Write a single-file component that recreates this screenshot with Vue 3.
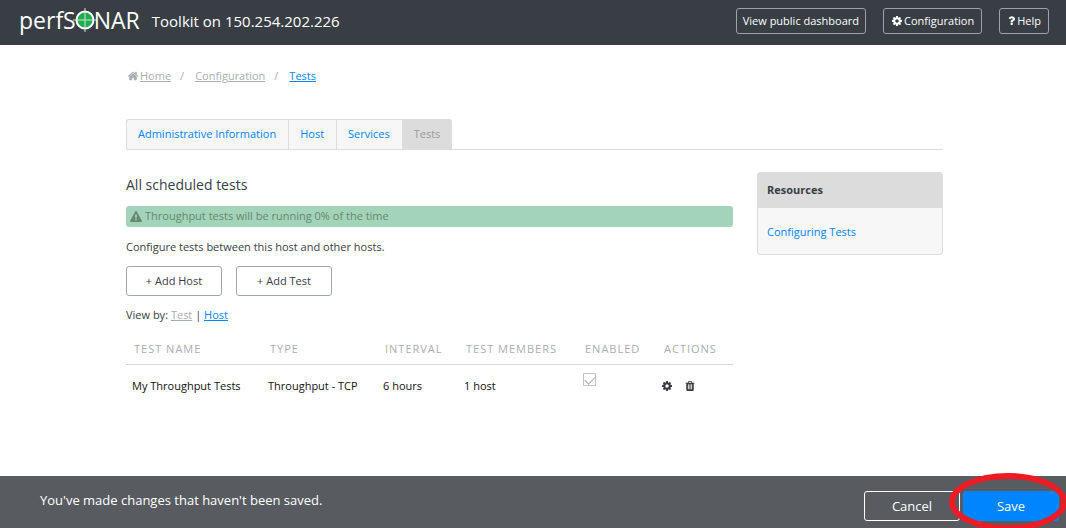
<script setup>
import { ref } from 'vue'

const icons = {
  cog: {
    box: '0 128 1536 1536',
    d: 'M1024 896q0-106-75-181t-181-75-181 75-75 181 75 181 181 75 181-75 75-181zm512-109v222q0 12-8 23t-20 13l-185 28q-19 54-39 91 35 50 107 138 10 12 10 25t-9 23q-27 37-99 108t-94 71q-12 0-26-9l-138-108q-44 23-91 38-16 136-29 186-7 28-36 28h-222q-14 0-24.500-8.500t-11.500-21.500l-28-184q-49-16-90-37l-141 107q-10 9-25 9-14 0-25-11-126-114-165-168-7-10-7-23 0-12 8-23 15-21 51-66.500t54-70.500q-27-50-41-99l-183-27q-13-2-21-12.500t-8-23.500v-222q0-12 8-23t19-13l186-28q14-46 39-92-40-57-107-138-10-12-10-24 0-10 9-23 26-36 98.500-107.500t94.500-71.500q13 0 26 10l138 107q44-23 91-38 16-136 29-186 7-28 36-28h222q14 0 24.500 8.500t11.500 21.500l28 184q49 16 90 37l142-107q9-9 24-9 13 0 25 10 129 119 165 170 7 8 7 22 0 12-8 23-15 21-51 66.500t-54 70.500q26 50 41 98l183 28q13 2 21 12.500t8 23.500z'
  },
  home: {
    box: '0 128 1664 1536',
    d: 'M1408 992v480q0 26-19 45t-45 19h-384v-384h-256v384h-384q-26 0-45-19t-19-45v-480q0-1 .5-3t.5-3l575-474 575 474q1 2 1 6zm223-69l-62 74q-8 9-21 11h-3q-13 0-21-7l-692-577-692 577q-12 8-24 7-13-2-21-11l-62-74q-8-10-7-23.500t11-21.500l719-599q32-26 76-26t76 26l244 204v-195q0-14 9-23t23-9h192q14 0 23 9t9 23v408l219 182q10 8 11 21.500t-7 23.500z'
  },
  warning: {
    box: '0 0 1792 1664',
    d: 'M1024 1375v-190q0-14-9.500-23.500t-22.500-9.500h-192q-13 0-22.500 9.500t-9.500 23.500v190q0 14 9.500 23.500t22.500 9.500h192q13 0 22.500-9.500t9.500-23.500zm-2-374l18-459q0-12-10-19-13-11-24-11h-220q-11 0-24 11-10 7-10 21l17 457q0 10 10 16.500t24 6.500h185q14 0 23.500-6.500t10.500-16.500zm-14-934l768 1408q35 63-2 126-17 29-46.500 46t-63.500 17h-1536q-34 0-63.500-17t-46.500-46q-37-63-2-126l768-1408q17-31 47-49t65-18 65 18 47 49z'
  },
  trash: {
    box: '0 128 1408 1536',
    d: 'M512 1376v-704q0-14-9-23t-23-9h-64q-14 0-23 9t-9 23v704q0 14 9 23t23 9h64q14 0 23-9t9-23zm256 0v-704q0-14-9-23t-23-9h-64q-14 0-23 9t-9 23v704q0 14 9 23t23 9h64q14 0 23-9t9-23zm256 0v-704q0-14-9-23t-23-9h-64q-14 0-23 9t-9 23v704q0 14 9 23t23 9h64q14 0 23-9t9-23zm-544-992h448l-48-117q-7-9-17-11h-317q-10 2-17 11zm928 32v64q0 14-9 23t-23 9h-96v948q0 83-47 143.500t-113 60.500h-832q-66 0-113-58.500t-47-141.500v-952h-96q-14 0-23-9t-9-23v-64q0-14 9-23t23-9h309l70-167q15-37 54-63t79-26h320q40 0 79 26t54 63l70 167h309q14 0 23 9t9 23z'
  },
  question: {
    box: '0 192 1024 1408',
    d: 'M704 1192v240q0 16-12 28t-28 12h-240q-16 0-28-12t-12-28v-240q0-16 12-28t28-12h240q16 0 28 12t12 28zm316-600q0 54-15.500 101t-35 76.500-55 59.500-57.500 43.500-61 35.500q-41 23-68.500 65t-27.500 67q0 17-12 32.500t-28 15.500h-240q-15 0-25.500-18.500t-10.500-37.500v-45q0-83 65-156.500t143-108.500q59-27 84-56t25-76q0-42-46.500-74t-107.500-32q-65 0-108 29-35 25-107 115-13 16-31 16-12 0-25-8l-164-125q-13-10-15.500-25t5.500-28q160-266 464-266 80 0 161 31t146 83 106 127.500 41 158.500z'
  }
}

const tabs = ['Administrative Information', 'Host', 'Services', 'Tests']
const activeTab = ref('Tests')
const tests = ref([
  { name: 'My Throughput Tests', type: 'Throughput - TCP', interval: '6 hours', members: '1 host', enabled: true }
])
</script>

<template>
  <div class="page">
    <header class="topbar">
      <a class="logo" href="#" aria-label="perfSONAR">
        <span>perfS</span>
        <svg class="target" viewBox="0 0 24 24" aria-hidden="true">
          <circle cx="12" cy="12" r="8.500" fill="#1fae4b" stroke="#fff" stroke-width="2" />
          <path d="M12 0V24M0 12H24" stroke="#d5dde0" stroke-width="1" />
        </svg>
        <span>NAR</span>
      </a>
      <span class="host">Toolkit on 150.254.202.226</span>
      <nav class="topnav">
        <a class="navbtn" href="#">View public dashboard</a>
        <a class="navbtn iconed" href="#"><svg class="icon" :viewBox="icons.cog.box" aria-hidden="true"><path :d="icons.cog.d" /></svg>Configuration</a>
        <a class="navbtn iconed" href="#"><svg class="icon question" :viewBox="icons.question.box" aria-hidden="true"><path :d="icons.question.d" /></svg>Help</a>
      </nav>
    </header>

    <main class="content">
      <nav class="crumbs" aria-label="Breadcrumb">
        <svg class="icon home" :viewBox="icons.home.box" aria-hidden="true"><path :d="icons.home.d" /></svg>
        <a href="#">Home</a><span class="sep">/</span>
        <a href="#">Configuration</a><span class="sep">/</span>
        <a class="current" href="#">Tests</a>
      </nav>

      <nav class="tabs">
        <a v-for="tab in tabs" :key="tab" href="#" class="tab" :class="{ active: tab === activeTab }" @click.prevent="activeTab = tab">{{ tab }}</a>
      </nav>

      <div class="columns">
        <section>
          <h1>All scheduled tests</h1>
          <div class="notice">
            <svg class="icon warning" :viewBox="icons.warning.box" aria-hidden="true"><path :d="icons.warning.d" /></svg>
            <span>Throughput tests will be running 0% of the time</span>
          </div>
          <p class="intro">Configure tests between this host and other hosts.</p>
          <div class="adders">
            <button type="button">+ Add Host</button>
            <button type="button">+ Add Test</button>
          </div>
          <p class="viewby">View by: <a class="muted" href="#">Test</a> | <a href="#">Host</a></p>
          <table>
            <colgroup>
              <col class="c-name"><col class="c-type"><col class="c-interval"><col class="c-members"><col class="c-enabled"><col>
            </colgroup>
            <thead>
              <tr>
                <th>Test name</th>
                <th>Type</th>
                <th>Interval</th>
                <th>Test members</th>
                <th>Enabled</th>
                <th>Actions</th>
              </tr>
            </thead>
            <tbody>
              <tr v-for="test in tests" :key="test.name">
                <td>{{ test.name }}</td>
                <td>{{ test.type }}</td>
                <td>{{ test.interval }}</td>
                <td>{{ test.members }}</td>
                <td class="enabled"><input v-model="test.enabled" type="checkbox" disabled :aria-label="'Enabled: ' + test.name"></td>
                <td class="rowactions">
                  <div>
                    <button type="button" aria-label="Configure test"><svg class="icon" :viewBox="icons.cog.box" aria-hidden="true"><path :d="icons.cog.d" /></svg></button>
                    <button type="button" aria-label="Delete test"><svg class="icon" :viewBox="icons.trash.box" aria-hidden="true"><path :d="icons.trash.d" /></svg></button>
                  </div>
                </td>
              </tr>
            </tbody>
          </table>
        </section>

        <aside class="resources">
          <h2>Resources</h2>
          <div class="links"><a href="#">Configuring Tests</a></div>
        </aside>
      </div>
    </main>

    <footer class="savebar">
      <p>You've made changes that haven't been saved.</p>
      <div class="saveactions">
        <button class="cancel" type="button">Cancel</button>
        <button class="save" type="button">Save</button>
        <svg class="ring" viewBox="0 0 120 60" aria-hidden="true">
          <ellipse cx="60" cy="30" rx="56" ry="26" fill="none" stroke="#ed1c24" stroke-width="6" />
        </svg>
      </div>
    </footer>
  </div>
</template>

<style>
body {
  margin: 0;
  background: #fff;
}
</style>

<style scoped>
* {
  box-sizing: border-box;
}

.page {
  display: flex;
  flex-direction: column;
  min-height: 100vh;
  overflow: hidden;
  color: #383e44;
  font: 11px/16px "Open Sans", "Noto Sans", sans-serif;
}

h1, h2, p {
  margin: 0;
}

a {
  color: #0085ff;
}

button {
  padding: 0;
  color: inherit;
  font: inherit;
  cursor: pointer;
}

.icon {
  width: 10px;
  height: 10px;
  flex: none;
  fill: currentColor;
}

.topbar {
  display: flex;
  align-items: center;
  height: 45px;
  padding: 0 17px 3px 19px;
  background: #383e44;
  color: #fff;
}

.logo {
  display: flex;
  align-items: center;
  padding-bottom: 2px;
  color: #fff;
  font-size: 23px;
  font-weight: 500;
  line-height: 32px;
  text-decoration: none;
}

.target {
  width: 24px;
  height: 24px;
  margin: 0 -3px;
}

.host {
  margin-left: 12px;
  font-size: 15px;
  line-height: 24px;
}

.topnav {
  display: flex;
  gap: 17px;
  margin-left: auto;
}

.navbtn {
  display: flex;
  align-items: center;
  justify-content: center;
  gap: 2px;
  height: 26px;
  padding: 0 6px;
  border: 1px solid #a0a3a6;
  border-radius: 3px;
  color: #fff;
  text-decoration: none;
}

.iconed {
  padding: 0 7px 0 8px;
}

.question {
  width: 7px;
}

.content {
  margin: 0 123px 24px 126px;
}

.crumbs {
  display: flex;
  align-items: center;
  margin-top: 23px;
  color: #a9aeb1;
}

.crumbs a {
  color: #a9aeb1;
}

.crumbs .current {
  color: #0085ff;
}

.home {
  width: 12px;
  margin: 0 1px;
}

.sep {
  margin: 0 11px 0 9px;
}

.tabs {
  display: flex;
  margin-top: 35px;
  border-bottom: 1px solid #dcdcdc;
}

.tab {
  padding: 6px 12px 7px 11px;
  border: 1px solid #dcdcdc;
  border-width: 1px 0 0 1px;
  background: #f7f7f7;
  text-decoration: none;
}

.tab:first-child {
  border-top-left-radius: 3px;
}

.tab:last-child {
  border-top-right-radius: 3px;
}

.tab.active {
  background: #dcdcdc;
  color: #999;
}

.columns {
  display: grid;
  grid-template-columns: minmax(0, 1fr) 186px;
  gap: 24px;
  align-items: start;
  margin-top: 22px;
}

h1 {
  padding-top: 2px;
  font-size: 14px;
  font-weight: 400;
  line-height: 22px;
}

.notice {
  display: flex;
  align-items: center;
  gap: 3px;
  height: 21px;
  margin-top: 10px;
  padding: 0 4px 1px;
  border-radius: 3px;
  background: #a2d4b9;
  color: #67876f;
}

.warning {
  width: 12px;
  height: 11px;
}

.intro {
  margin-top: 12px;
}

.adders {
  display: flex;
  gap: 14px;
  margin-top: 11px;
}

.adders button {
  width: 96px;
  height: 30px;
  border: 1px solid #a0a6ab;
  border-radius: 3px;
  background: #fff;
}

.viewby {
  margin-top: 11px;
}

.viewby .muted {
  color: #a9aeb1;
}

table {
  width: 100%;
  margin-top: 11px;
  border-collapse: collapse;
  table-layout: fixed;
}

.c-name {
  width: 136px;
}

.c-type {
  width: 115px;
}

.c-interval {
  width: 81px;
}

.c-members {
  width: 119px;
}

.c-enabled {
  width: 79px;
}

th {
  height: 30px;
  padding: 1px 0 0 8px;
  border-bottom: 1px solid #d5d8d8;
  color: #a9aeb1;
  font-weight: 400;
  letter-spacing: 1px;
  text-align: left;
  text-transform: uppercase;
  white-space: nowrap;
}

td {
  height: 43px;
  padding: 0 0 0 6px;
  color: #111;
}

.enabled {
  padding: 8px 0 0 6px;
  vertical-align: top;
}

.enabled input {
  display: block;
  width: 13px;
  height: 13px;
  margin: 0;
  border: 1px solid #c3c3c3;
  background: #fff;
  appearance: none;
}

.enabled input:checked::before {
  content: "";
  display: block;
  width: 9px;
  height: 5px;
  margin: 2px 1px;
  border: solid #aaa;
  border-width: 0 0 1px 1px;
  transform: rotate(-45deg);
}

.rowactions {
  padding-left: 6px;
}

.rowactions div {
  display: flex;
  gap: 13px;
}

.rowactions button {
  display: flex;
  border: 0;
  background: none;
  color: #383e44;
}

.resources {
  border: 1px solid #dcdcdc;
  border-radius: 3px;
  background: #f7f7f7;
}

h2 {
  padding: 9px 9px 10px;
  background: #dcdcdc;
  font-size: 11px;
  line-height: 16px;
}

.links {
  padding: 16px 9px 14px;
}

.links a {
  text-decoration: none;
}

.savebar {
  display: flex;
  align-items: flex-start;
  justify-content: space-between;
  height: 52px;
  margin-top: auto;
  padding: 15px 7px 0 40px;
  background: #585c60;
  color: #fff;
  font-size: 13px;
  line-height: 18px;
}

.saveactions {
  position: relative;
  display: flex;
  gap: 3px;
}

.saveactions button {
  width: 96px;
  height: 30px;
  border: 1px solid #fff;
  border-radius: 3px;
  background: none;
}

.saveactions .save {
  border-color: #0085ff;
  background: #0085ff;
}

/* Highlight drawn over the save button */
.ring {
  position: absolute;
  top: -19px;
  right: -9px;
  width: 120px;
  height: 60px;
  pointer-events: none;
}
</style>
